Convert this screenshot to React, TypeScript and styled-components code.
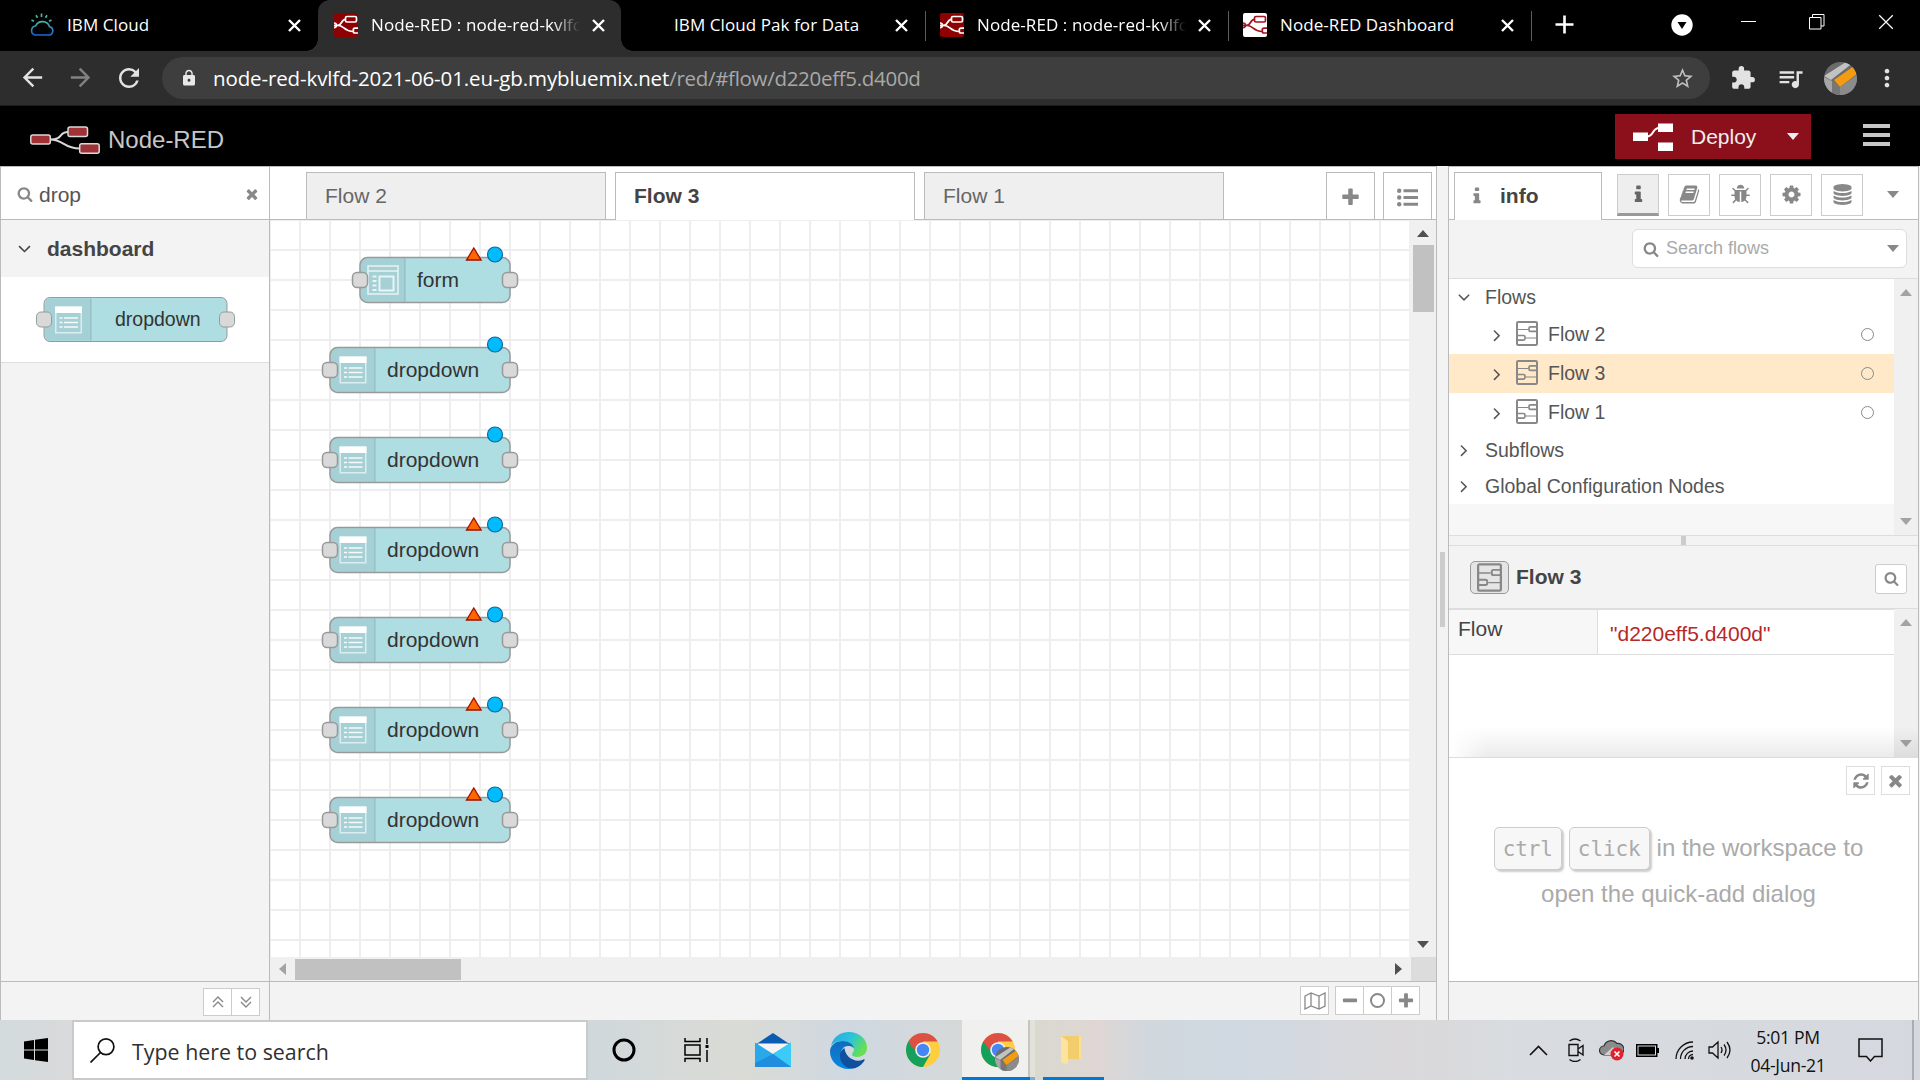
import React from 'react';
import styled, { createGlobalStyle, css } from 'styled-components';
import {
  MdArrowBack, MdArrowForward, MdRefresh, MdLock, MdStarBorder, MdExtension, MdQueueMusic, MdMoreVert,
} from 'react-icons/md';

const ui = '"Open Sans", "Noto Sans", sans-serif';
const sans = '"Liberation Sans", Arial, sans-serif';

const GlobalStyle = createGlobalStyle`
  * { box-sizing: border-box; }
  html, body { margin: 0; padding: 0; overflow: hidden; }
  svg { display: block; flex: none; }
`;

const Screen = styled.div`
  width: 1920px;
  height: 1080px;
  display: flex;
  flex-direction: column;
  overflow: hidden;
  background: #fff;
  font-family: ${sans};
  white-space: nowrap;
`;

/* ---------- glyphs ---------- */

const glyphs = {
  search: 'M1216 832q0-185-131.5-316.5t-316.5-131.5-316.5 131.5-131.5 316.5 131.5 316.5 316.5 131.5 316.5-131.5 131.5-316.5zm512 832q0 52-38 90t-90 38q-54 0-90-38l-343-342q-179 124-399 124-143 0-273.5-55.5t-225-150-150-225-55.5-273.5 55.5-273.5 150-225 225-150 273.5-55.5 273.5 55.5 225 150 150 225 55.5 273.5q0 220-124 399l343 343q37 37 37 90z',
  times: 'M1490 1322q0 40-28 68l-136 136q-28 28-68 28t-68-28l-294-294-294 294q-28 28-68 28t-68-28l-136-136q-28-28-28-68t28-68l294-294-294-294q-28-28-28-68t28-68l136-136q28-28 68-28t68 28l294 294 294-294q28-28 68-28t68 28l136 136q28 28 28 68t-28 68l-294 294 294 294q28 28 28 68z',
  plus: 'M1600 736v192q0 40-28 68t-68 28h-416v416q0 40-28 68t-68 28h-192q-40 0-68-28t-28-68v-416h-416q-40 0-68-28t-28-68v-192q0-40 28-68t68-28h416v-416q0-40 28-68t68-28h192q40 0 68 28t28 68v416h416q40 0 68 28t28 68z',
  minus: 'M1600 736v192q0 40-28 68t-68 28h-1216q-40 0-68-28t-28-68v-192q0-40 28-68t68-28h1216q40 0 68 28t28 68z',
  angleDown: 'M1395 736q0 13-10 23l-466 466q-10 10-23 10t-23-10l-466-466q-10-10-10-23t10-23l50-50q10-10 23-10t23 10l393 393 393-393q10-10 23-10t23 10l50 50q10 10 10 23z',
  angleRight: 'M1171 960q0 13-10 23l-466 466q-10 10-23 10t-23-10l-50-50q-10-10-10-23t10-23l393-393-393-393q-10-10-10-23t10-23l50-50q10-10 23-10t23 10l466 466q10 10 10 23z',
  info: 'M1216 1344v128q0 26-19 45t-45 19h-512q-26 0-45-19t-19-45v-128q0-26 19-45t45-19h64v-384h-64q-26 0-45-19t-19-45v-128q0-26 19-45t45-19h384q26 0 45 19t19 45v576h64q26 0 45 19t19 45zm-128-1152v192q0 26-19 45t-45 19h-256q-26 0-45-19t-19-45v-192q0-26 19-45t45-19h256q26 0 45 19t19 45z',
  cog: 'M1152 896q0-106-75-181t-181-75-181 75-75 181 75 181 181 75 181-75 75-181zm512-109v222q0 12-8 23t-20 13l-185 28q-19 54-39 91 35 50 107 138 10 12 10 25t-9 23q-27 37-99 108t-94 71q-12 0-26-9l-138-108q-44 23-91 38-16 136-29 186-7 28-36 28h-222q-14 0-24.5-8.5t-11.5-21.5l-28-184q-49-16-90-37l-141 107q-10 9-25 9-14 0-25-11-126-114-165-168-7-10-7-23 0-12 8-23 15-21 51-66.5t54-70.5q-27-50-41-99l-183-27q-13-2-21-12.5t-8-23.5v-222q0-12 8-23t19-13l186-28q14-46 39-92-40-57-107-138-10-12-10-24 0-10 9-23 26-36 98.5-107.5t94.5-71.5q13 0 26 10l138 107q44-23 91-38 16-136 29-186 7-28 36-28h222q14 0 24.5 8.5t11.5 21.5l28 184q49 16 90 37l142-107q9-9 24-9 13 0 25 10 129 119 165 170 7 8 7 22 0 12-8 23-15 21-51 66.5t-54 70.5q26 50 41 98l183 28q13 2 21 12.5t8 23.5z',
  database: 'M896 768q237 0 443-43t325-127v170q0 69-103 128t-280 93.5-385 34.5-385-34.5-280-93.5-103-128v-170q119 84 325 127t443 43zm0 768q237 0 443-43t325-127v170q0 69-103 128t-280 93.5-385 34.5-385-34.5-280-93.5-103-128v-170q119 84 325 127t443 43zm0-384q237 0 443-43t325-127v170q0 69-103 128t-280 93.5-385 34.5-385-34.5-280-93.5-103-128v-170q119 84 325 127t443 43zm0-1152q208 0 385 34.5t280 93.5 103 128v128q0 69-103 128t-280 93.5-385 34.5-385-34.5-280-93.5-103-128v-128q0-69 103-128t280-93.5 385-34.5z',
  refresh: 'M1639 1056q0 5-1 7-64 268-268 434.5t-478 166.5q-146 0-282.5-55t-243.5-157l-129 129q-19 19-45 19t-45-19-19-45v-448q0-26 19-45t45-19h448q26 0 45 19t19 45-19 45l-137 137q71 66 161 102t187 36q134 0 250-65t186-179q11-17 53-117 8-23 30-23h192q13 0 22.5 9.5t9.5 22.5zm25-800v448q0 26-19 45t-45 19h-448q-26 0-45-19t-19-45 19-45l138-138q-148-137-349-137-134 0-250 65t-186 179q-11 17-53 117-8 23-30 23h-199q-13 0-22.5-9.5t-9.5-22.5v-7q65-268 270-434.5t480-166.5q146 0 284 55.5t245 156.5l130-129q19-19 45-19t45 19 19 45z',
  bug: 'M1696 960q0 26-19 45t-45 19h-224q0 171-67 290l208 209q19 19 19 45t-19 45q-18 19-45 19t-45-19l-198-197q-5 5-15 13t-42 28.5-65 36.5-82 29-97 13v-896h-128v896q-51 0-101.5-13.5t-87-33-66-39-43.5-32.5l-15-14-183 207q-20 21-48 21-24 0-43-16-19-18-20.5-44.5t15.5-46.5l202-227q-58-114-58-274h-224q-26 0-45-19t-19-45 19-45 45-19h224v-294l-173-173q-19-19-19-45t19-45 45-19 45 19l173 173h844l173-173q19-19 45-19t45 19 19 45-19 45l-173 173v294h224q26 0 45 19t19 45zm-480-576h-640q0-133 93.5-226.5t226.5-93.5 226.5 93.5 93.5 226.5z',
  book: 'M1703 478q40 57 18 129l-275 906q-19 64-76.5 107.5t-122.5 43.5h-923q-77 0-148.5-53.5t-99.5-131.5q-24-67-2-127 0-4 3-27t4-37q1-8-3-21.500t-3-19.500q2-11 8-21t16.500-23.500 16.500-23.500q23-38 45-91.500t30-91.500q3-10 .5-30t-.5-28q3-11 17-28t17-23q21-36 42-92t25-90q1-9-2.500-32t.5-28q4-13 22-30.500t22-22.500q19-26 42.500-84.500t27.500-96.500q1-8-3-25.500t-2-26.500q2-8 9-18t18-23 17-21q8-12 16.500-30.500t15-35 16-36 19.500-32 26.500-23.500 36-11.500 47.500 5.500l-1 3q38-9 51-9h761q74 0 114 56t18 130l-274 906q-36 119-71.500 153.500t-128.500 34.500h-869q-27 0-38 15-11 16-1 43 24 70 144 70h923q29 0 56-15.500t35-41.500l300-987q7-22 5-57 38 15 59 43zm-1064 2q-4 13 2 22.500t20 9.500h608q13 0 25.500-9.500t16.500-22.500l21-64q4-13-2-22.500t-20-9.500h-608q-13 0-25.500 9.500t-16.500 22.500zm-83 256q-4 13 2 22.500t20 9.500h608q13 0 25.500-9.500t16.500-22.500l21-64q4-13-2-22.500t-20-9.500h-608q-13 0-25.500 9.500t-16.500 22.500z',
};

type GlyphName = keyof typeof glyphs;

const Glyph = ({ name, size = 18, color = '#888' }: { name: GlyphName; size?: number; color?: string }) => (
  <svg width={size} height={size} viewBox="0 0 1792 1792" fill={color}><path d={glyphs[name]} /></svg>
);

type Direction = 'up' | 'down' | 'left' | 'right';
const triangles: Record<Direction, string> = {
  up: '0,7 12,7 6,0', down: '0,0 12,0 6,7', left: '7,0 7,12 0,6', right: '0,0 0,12 7,6',
};
const Arrow = ({ dir = 'down', color = '#888' }: { dir?: Direction; color?: string }) => {
  const flat = dir === 'up' || dir === 'down';
  return (
    <svg width={flat ? 12 : 7} height={flat ? 7 : 12}><polygon points={triangles[dir]} fill={color} /></svg>
  );
};

/* ---------- browser tabs ---------- */

const TabStrip = styled.div`
  height: 51px;
  flex: none;
  display: flex;
  background: #000;
  padding-left: 15px;
  font-family: ${ui};
  color: #fff;
`;

const BrowserTab = styled.div<{ $active?: boolean; $line?: boolean }>`
  position: relative;
  width: 303px;
  height: 51px;
  display: flex;
  align-items: center;
  padding: 0 16px 1px 16px;
  font-size: 17px;
  ${p => p.$active && css`
    background: #2d2d2d;
    border-radius: 12px 12px 0 0;
    &::before, &::after {
      content: '';
      position: absolute;
      bottom: 0;
      width: 12px;
      height: 12px;
    }
    &::before { left: -12px; background: radial-gradient(circle at 0 0, #000 11.5px, #2d2d2d 12px); }
    &::after { right: -12px; background: radial-gradient(circle at 100% 0, #000 11.5px, #2d2d2d 12px); }
  `}
  ${p => p.$line && css`
    &::after {
      content: '';
      position: absolute;
      right: -2px;
      top: 11px;
      width: 1px;
      height: 30px;
      background: #5c5c5c;
    }
  `}
`;

const FirstTab = styled(BrowserTab)`padding-left: 15px; padding-right: 17px;`;

const Favicon = styled.div`
  width: 24px;
  height: 24px;
  margin-right: 13px;
  flex: none;
`;

const TabTitle = styled.div<{ $fade?: boolean }>`
  width: 209px;
  overflow: hidden;
  padding-bottom: 2px;
  letter-spacing: 0.08px;
  ${p => p.$fade && css`mask-image: linear-gradient(90deg, #000 182px, transparent 209px);`}
`;

const TabClose = styled.div`margin-left: 12px;`;

const Cross = ({ size = 13, w = 2.4 }: { size?: number; w?: number }) => (
  <svg width={size} height={size} viewBox="0 0 13 13"><path d="M1 1L12 12M12 1L1 12" stroke="#fff" strokeWidth={w} /></svg>
);

const NodeRedFavicon = ({ bg, ink }: { bg: string; ink: string }) => (
  <svg width="24" height="24" viewBox="0 0 24 24">
    <rect width="24" height="24" rx="2" fill={bg} />
    <g fill="none" stroke={ink} strokeWidth="1.7">
      <path d="M0 12.300H4C8 12.300 7 6.500 11.500 6.300M4 12.300C10 12.300 10 18.500 19 18.500" />
      <rect x="11.500" y="3.500" width="11" height="5.500" rx="1.500" />
      <path d="M24 15.200H21q-1.700 0-1.700 1.700v1.400q0 1.700 1.700 1.700H24" />
      <path d="M0 10q2.500 0 2.500 2.300T0 14.600" />
    </g>
  </svg>
);

const CloudFavicon = () => (
  <svg width="24" height="24" viewBox="0 0 24 24" fill="none">
    <defs>
      <linearGradient id="sky" x1="0" y1="0" x2="0" y2="1"><stop offset="0" stopColor="#49b5a9" /><stop offset="1" stopColor="#1667d8" /></linearGradient>
    </defs>
    <path d="M5 22h13.500a4.200 4.200 0 0 0 1-8.300A7.500 7.500 0 0 0 5.600 13 4.600 4.600 0 0 0 5 22z" stroke="url(#sky)" strokeWidth="1.600" />
    <path d="M11.500 0.500v3.500M6 2.300l1.500 2.500M17 2.300l-1.500 2.500M1.500 7l2.500 1.300M21.500 7l-2.500 1.300" stroke="#49b5a9" strokeWidth="1.700" />
  </svg>
);

const WindowControls = styled.div`
  display: flex;
  align-items: flex-start;
  flex: 1;
  padding: 14px 27px 0 25px;
`;
const NewTab = styled.div`padding-top: 1px; margin-right: 97px;`;
const TabSearch = styled.div`margin-right: 48px;`;
const Minimise = styled.div`width: 15px; height: 1px; background: #fff; margin: 7px 53px 0 0;`;
const Restore = styled.div`margin-right: 53px;`;

/* ---------- browser toolbar ---------- */

const Toolbar = styled.div`
  height: 55px;
  flex: none;
  display: flex;
  align-items: center;
  background: #2d2d2d;
  border-bottom: 1px solid #1c1c1c;
  padding: 0 17px 0 18px;
  color: #e2e2e2;
`;
const NavButtons = styled.div`
  flex: none;
  display: flex;
  gap: 19px;
  width: 144px;
  svg:nth-child(2) { color: #828282; }
`;
const Omnibox = styled.div`
  width: 1548px;
  height: 42px;
  flex: none;
  border-radius: 21px;
  background: #3e3e3e;
  display: flex;
  align-items: center;
  padding: 0 15px 0 18px;
  font: 20.5px ${ui};
  color: #fff;
`;
const Url = styled.div`
  flex: 1;
  padding-left: 15px;
  letter-spacing: -0.12px;
  span { color: #a9a9a9; letter-spacing: -0.3px; }
`;
const Extensions = styled.div`
  flex: 1;
  display: flex;
  align-items: center;
  padding-left: 20px;
`;
const Avatar = styled.div`margin: 0 16px 0 19px;`;

const AvatarArt = ({ size = 33 }: { size?: number }) => (
  <svg width={size} height={size} viewBox="0 0 33 33">
    <defs><clipPath id="disc"><circle cx="16.500" cy="16.500" r="16.500" /></clipPath></defs>
    <g clipPath="url(#disc)">
      <rect width="33" height="33" fill="#6c6c6c" />
      <path d="M0 14L22 0h8L7 18z" fill="#c2c2c2" />
      <path d="M0 15l8 4v14H0z" fill="#a6a6a6" />
      <path d="M10 18L30 4l3 8-17 13z" fill="#f39c12" />
      <path d="M8 19l8 6v8H8zM16 25l17-12v20H16z" fill="#8b8b8b" />
      <path d="M8 19l8 6v8H8z" fill="#777" />
    </g>
  </svg>
);

/* ---------- editor header ---------- */

const EditorHeader = styled.div`
  height: 60px;
  flex: none;
  display: flex;
  align-items: center;
  background: #000;
  padding: 0 30px 0 30px;
`;
const Brand = styled.div`
  flex: 1;
  display: flex;
  align-items: center;
  gap: 8px;
  padding-top: 7px;
  font-size: 24px;
  color: #c7c7c7;
`;
const Deploy = styled.div`
  width: 196px;
  height: 45px;
  margin: 1px 52px 0 0;
  background: #8c101c;
  color: #eee;
  display: flex;
  align-items: center;
  padding: 0 12px 0 18px;
  font-size: 21px;
`;
const DeployLabel = styled.div`flex: 1; padding-left: 18px;`;
const MenuBars = styled.div`
  width: 27px;
  height: 22px;
  margin-bottom: 2px;
  display: flex;
  flex-direction: column;
  justify-content: space-between;
  div { height: 4px; background: #c7c7c7; }
`;

/* ---------- editor body ---------- */

const Editor = styled.div`
  height: 854px;
  flex: none;
  display: flex;
  background: #f3f3f3;
  padding: 0 1px;
`;

const column = css`
  display: flex;
  flex-direction: column;
  border: 1px solid #bbb;
  border-bottom: 0;
`;

const Footer = styled.div`
  height: 39px;
  flex: none;
  display: flex;
  justify-content: flex-end;
  align-items: flex-start;
  background: #f3f3f3;
  border-top: 1px solid #bbb;
`;
const BoxButton = styled.div<{ $h?: number }>`
  width: 29px;
  height: ${p => p.$h ?? 29}px;
  border: 1px solid #ccc;
  background: #fff;
  display: flex;
  align-items: center;
  justify-content: center;
  & + & { margin-left: -1px; }
`;

const Palette = styled.div`${column} width: 269px; margin-left: -1px; border-right: 0;`;
const PaletteSearch = styled.div`
  height: 53px;
  border-bottom: 1px solid #bbb;
  background: #fff;
  display: flex;
  align-items: center;
  padding: 3px 9px 0 16px;
  font-size: 21px;
  color: #555;
  div { flex: 1; padding-left: 6px; }
  svg { margin-bottom: 2px; }
`;
const Category = styled.div`
  height: 57px;
  display: flex;
  align-items: center;
  gap: 12px;
  padding-left: 13px;
  font-size: 21px;
  font-weight: bold;
  color: #444;
`;
const PaletteItems = styled.div`
  position: relative;
  height: 86px;
  background: #fff;
  border-bottom: 1px solid #ddd;
`;
const PaletteFill = styled.div`flex: 1;`;
const PaletteFooter = styled(Footer)`padding: 6px 9px 0 0;`;

/* ---------- flow nodes ---------- */

const NodeFrame = styled.div`
  position: absolute;
  height: 45px;
  color: #333;
  font-size: 21px;
  > svg { overflow: visible; position: absolute; left: 0; top: 0; }
`;
const NodeLabel = styled.div<{ $left: number; $size: number }>`
  position: relative;
  padding-left: ${p => p.$left}px;
  font-size: ${p => p.$size}px;
  line-height: 45px;
`;

const DropdownGlyph = () => (
  <g>
    <rect x="0.750" y="0.750" width="25.500" height="25.500" fill="none" stroke="#fff" strokeOpacity=".6" strokeWidth="1.500" />
    <rect width="27" height="6.500" fill="#fff" />
    {[11.5, 16, 20.5].map(y => (
      <path key={y} d={`M4.500 ${y}h3M9 ${y}h14`} stroke="#fff" strokeOpacity=".9" strokeWidth="1.500" />
    ))}
  </g>
);
const FormGlyph = () => (
  <g fill="none" stroke="#fff" strokeOpacity=".75" strokeWidth="1.500">
    <rect x="-1.500" y="-0.500" width="30" height="28" />
    <path d="M-1 4.500h29" />
    <rect x="10" y="10" width="14" height="14" strokeWidth="2" />
    <path d="M3 10h4M3 14.500h4M3 19h4M3 23.500h4" strokeWidth="2" />
  </g>
);

type FlowNodeProps = { x: number; y: number; w: number; label: string; warn?: boolean; changed?: boolean; small?: boolean };

const FlowNode = ({ x, y, w, label, warn, changed, small }: FlowNodeProps) => {
  const h = small ? 44 : 45;
  const cell = small ? 47 : 45;
  return (
    <NodeFrame style={{ left: x, top: y, width: w }}>
      <svg width={w} height={h}>
        <g transform="translate(0 0.5)">
          <rect width={w} height={h} rx={small ? 6 : 7.5} fill="#aedde2" stroke="#999" strokeWidth={small ? 1 : 1.5} />
          <path d={`M${cell} 1V${h - 1}H7q-6 0-6-6V7q0-6 6-6z`} fill="#000" fillOpacity=".05" />
          <path d={`M${cell} 1V${h - 1}`} stroke="#000" strokeOpacity=".1" strokeWidth="1.500" />
          <g transform={`translate(${small ? 11 : 9.5} 9)`}>{label === 'form' ? <FormGlyph /> : <DropdownGlyph />}</g>
          {[-7.5, w - 7.5].map(px => (
            <rect key={px} x={px} y={h / 2 - 7.500} width="15" height="15" rx="4.500" fill="#d9d9d9" stroke="#999" strokeWidth={small ? 1 : 1.5} />
          ))}
          {warn && <path d="M136.500 2.500l7.300-12 7.300 12z" transform={`translate(${w - 180} 0)`} fill="#ff6600" stroke="#a01000" strokeWidth="1.300" />}
          {changed && <circle cx={w - 15} cy="-3" r="7.500" fill="#00bcff" stroke="#0b6a99" strokeWidth="1.200" />}
        </g>
      </svg>
      <NodeLabel $left={small ? 71 : 57} $size={small ? 19.5 : 21}>{label}</NodeLabel>
    </NodeFrame>
  );
};

/* ---------- workspace ---------- */

const Workspace = styled.div`${column} width: 1168px;`;
const WorkspaceTabs = styled.div`
  height: 53px;
  flex: none;
  display: flex;
  align-items: flex-end;
  background: #fff;
  border-bottom: 1px solid #bbb;
  padding: 0 4px 0 36px;
`;
const FlowTab = styled.div<{ $active?: boolean }>`
  width: 300px;
  height: 47px;
  margin-right: 9px;
  border: 1px solid #bbb;
  border-bottom: 0;
  background: ${p => (p.$active ? '#fff' : '#efefef')};
  padding-left: 18px;
  font-size: 21px;
  line-height: 45px;
  color: #666;
  ${p => p.$active && css`
    height: 48px;
    margin-bottom: -1px;
    font-weight: bold;
    color: #444;
  `}
`;
const TabActions = styled.div`
  margin-left: auto;
  display: flex;
  gap: 8px;
`;
const TabAction = styled.div`
  width: 49px;
  height: 47px;
  border: 1px solid #bbb;
  border-bottom: 0;
  display: flex;
  align-items: center;
  justify-content: center;
  padding-top: 3px;
`;
const Stage = styled.div`flex: 1; display: flex; min-height: 0;`;
const Canvas = styled.div`
  position: relative;
  width: 1139px;
  overflow: hidden;
  background-color: #fff;
  background-image: linear-gradient(90deg, #eee 2px, transparent 2px), linear-gradient(#eee 2px, transparent 2px);
  background-size: 30px 30px;
  background-position: -1px -1px;
`;
const VScroll = styled.div`
  flex: 1;
  display: flex;
  flex-direction: column;
  align-items: center;
  background: #f0f0f0;
  padding: 10px 0 9px 1px;
`;
const VThumb = styled.div`width: 21px; height: 67px; margin: 8px 0 auto; background: #c1c1c1;`;
const HScroll = styled.div`
  height: 24px;
  flex: none;
  display: flex;
  align-items: center;
  background: #f0f0f0;
  padding-left: 9px;
`;
const HThumb = styled.div`width: 166px; height: 21px; margin: 0 auto 0 9px; background: #c1c1c1;`;
const ScrollCorner = styled.div`width: 25px; height: 24px; margin-left: 9px; background: #dcdcdc;`;
const WorkspaceFooter = styled(Footer)`padding: 4px 16px 0 0;`;
const ZoomGroup = styled.div`display: flex; margin-left: 6px;`;

const Divider = styled.div`
  width: 11px;
  display: flex;
  align-items: center;
  justify-content: center;
  padding-bottom: 7px;
  &::after { content: ''; width: 5px; height: 75px; background: #ccc; }
`;

const nodes: FlowNodeProps[] = [
  { x: 90, y: 37, w: 150, label: 'form', warn: true, changed: true },
  { x: 60, y: 127, w: 180, label: 'dropdown', changed: true },
  { x: 60, y: 217, w: 180, label: 'dropdown', changed: true },
  { x: 60, y: 307, w: 180, label: 'dropdown', warn: true, changed: true },
  { x: 60, y: 397, w: 180, label: 'dropdown', warn: true, changed: true },
  { x: 60, y: 487, w: 180, label: 'dropdown', warn: true, changed: true },
  { x: 60, y: 577, w: 180, label: 'dropdown', warn: true, changed: true },
];

/* ---------- sidebar ---------- */

const Sidebar = styled.div`${column} width: 471px;`;
const SidebarTabs = styled.div`
  height: 53px;
  flex: none;
  display: flex;
  background: #fff;
  border-bottom: 1px solid #bbb;
  padding: 5px 19px 0 5px;
`;
const InfoTab = styled.div`
  width: 148px;
  height: 48px;
  margin-bottom: -1px;
  border: 1px solid #bbb;
  border-bottom: 0;
  background: #fff;
  display: flex;
  align-items: center;
  gap: 13px;
  padding: 0 0 1px 12px;
  font-size: 21px;
  font-weight: bold;
  color: #444;
`;
const SidebarButtons = styled.div`
  flex: 1;
  display: flex;
  gap: 9px;
  padding: 2px 0 0 15px;
`;
const SidebarButton = styled.div<{ $active?: boolean }>`
  width: 42px;
  height: 42px;
  border: 1px solid #ccc;
  background: #fff;
  display: flex;
  align-items: center;
  justify-content: center;
  padding-bottom: 1px;
  ${p => p.$active && css`background: #eee; border-bottom: 3px solid #999; padding-bottom: 0;`}
`;
const TabsCaret = styled.div`padding-top: 19px;`;
const FilterBar = styled.div`
  height: 59px;
  flex: none;
  border-bottom: 1px solid #ddd;
  display: flex;
  justify-content: flex-end;
  padding: 9px 11px 0 0;
`;
const FilterBox = styled.div`
  width: 275px;
  height: 39px;
  border: 1px solid #ddd;
  border-radius: 6px;
  background: #fff;
  display: flex;
  align-items: center;
  padding: 0 7px 0 10px;
  font-size: 18px;
  color: #aaa;
  div { flex: 1; padding-left: 7px; }
`;
const Scrollable = styled.div<{ $h: number; $bg: string }>`
  height: ${p => p.$h}px;
  flex: none;
  display: flex;
  background: ${p => p.$bg};
`;
const ScrollBody = styled.div`width: 445px;`;
const ScrollTrack = styled.div`
  flex: 1;
  display: flex;
  flex-direction: column;
  justify-content: space-between;
  align-items: center;
  background: #f0f0f0;
  padding: 10px 0;
`;
const TreeRow = styled.div<{ $depth?: number; $selected?: boolean }>`
  height: ${p => (p.$depth ? 39 : 36)}px;
  background: ${p => (p.$selected ? '#ffe9c8' : '#fff')};
  display: flex;
  align-items: center;
  padding: 0 20px 0 ${p => (p.$depth ? 38 : 5)}px;
  font-size: 19.5px;
  color: #555;
`;
const TreeLabel = styled.div<{ $gap: number }>`flex: 1; padding-left: ${p => p.$gap}px;`;
const TreeIcon = styled.div`padding: 0 0 3px 9px;`;
const Ring = styled.div<{ $size: number; $w: number }>`
  width: ${p => p.$size}px;
  height: ${p => p.$size}px;
  border: ${p => p.$w}px solid #888;
  border-radius: 50%;
`;
const Grip = styled.div`
  height: 11px;
  flex: none;
  border: 1px solid #ddd;
  border-width: 1px 0;
  display: flex;
  justify-content: center;
  &::after { content: ''; width: 5px; background: #ccc; }
`;
const DetailHeader = styled.div`
  height: 63px;
  flex: none;
  border-bottom: 1px solid #ddd;
  display: flex;
  align-items: center;
  padding: 0 11px 0 21px;
  font-size: 21px;
  font-weight: bold;
  color: #444;
`;
const DetailIcon = styled.div`
  width: 39px;
  height: 33px;
  margin-right: 7px;
  border: 1px solid #999;
  border-radius: 5px;
  background: #e5e5e5;
  display: flex;
  align-items: center;
  justify-content: center;
`;
const DetailButton = styled.div`
  width: 32px;
  height: 30px;
  margin: 3px 0 0 auto;
  border: 1px solid #ccc;
  border-radius: 3px;
  background: #fff;
  display: flex;
  align-items: center;
  justify-content: center;
`;
const PropertyRow = styled.div`
  height: 46px;
  display: grid;
  grid-template-columns: 149px 1fr;
  grid-template-rows: 44px;
  border: 1px solid #ddd;
  border-width: 1px 0;
  font-size: 21px;
`;
const PropertyName = styled.div`
  border-right: 1px solid #ddd;
  background: #f7f7f7;
  padding-left: 9px;
  line-height: 38px;
  color: #444;
`;
const PropertyValue = styled.div`padding-left: 12px; line-height: 48px; color: #b72828;`;
const Details = styled.div`
  position: relative;
  &::after {
    content: '';
    position: absolute;
    inset: auto 0 0 0;
    height: 30px;
    background: linear-gradient(transparent, rgba(0, 0, 0, 0.08));
    mask-image: linear-gradient(90deg, transparent, #000 40px);
  }
`;
const Tips = styled.div`
  flex: 1;
  border-top: 1px solid #ddd;
  background: #fff;
  display: flex;
  flex-direction: column;
  color: #aaa;
  font-size: 24px;
`;
const TipButtons = styled.div`
  display: flex;
  justify-content: flex-end;
  gap: 7px;
  padding: 8px 8px 0 0;
  & > div { border-color: #ddd; margin: 0; }
`;
const TipLine = styled.div`
  height: 46px;
  display: flex;
  align-items: center;
  justify-content: center;
  padding-right: 10px;
`;
const TipText = styled.div`
  padding-top: 30px;
`;
const Key = styled.kbd`
  height: 43px;
  margin-right: 7px;
  padding: 0 8px;
  border: 1px solid #ccc;
  border-radius: 5px;
  background: #f7f7f7;
  box-shadow: 2px 2px 2px rgba(0, 0, 0, 0.2);
  font: 21px/43px "DejaVu Sans Mono", monospace;
  letter-spacing: -0.1px;
`;
const SidebarFooter = styled(Footer)``;

const FlowGlyph = ({ w = 22, h = 25 }: { w?: number; h?: number }) => (
  <svg width={w} height={h} viewBox="0 0 22 25" fill="none" stroke="#888" strokeWidth="1.700">
    <rect x="1" y="1" width="20" height="23" rx="1.200" strokeWidth="2" />
    <path d="M1 8.500h11M10 17h11" strokeWidth="1.200" />
    <path d="M21 5.800h-6.500q-1.500 0-1.500 1.500v1.600q0 1.500 1.500 1.500H21M1 14.500h6.500q1.500 0 1.500 1.500v1.600q0 1.500-1.500 1.500H1" />
  </svg>
);

const flows = [{ name: 'Flow 2' }, { name: 'Flow 3', selected: true }, { name: 'Flow 1' }];

/* ---------- taskbar ---------- */

const Taskbar = styled.div`
  height: 60px;
  flex: none;
  display: flex;
  background: linear-gradient(90deg, #d3dadd 0, #d9dadb 70px, #d0d8dc 590px, #dadbd5 740px, #cfd8e1 850px, #d5d9da 950px, #d9d9cf 1036px, #dfd6d4 1095px, #d0d8de 1150px, #d0d9e2 1240px, #dad8da 1400px, #d8dce0 1520px, #d5d9df 1920px);
  font-family: ${ui};
`;
const Start = styled.div`width: 72px; padding: 18px 0 0 24px;`;
const SearchField = styled.div`
  width: 516px;
  height: 60px;
  border: 2px solid #c9cbcb;
  background: #fff;
  display: flex;
  align-items: center;
  gap: 17px;
  padding: 0 16px;
  font-size: 21.4px;
  color: #303030;
  span { padding-top: 2px; }
`;
const TaskButton = styled.div<{ $w: number; $running?: boolean; $focused?: boolean }>`
  width: ${p => p.$w}px;
  height: 60px;
  display: flex;
  align-items: center;
  justify-content: center;
  ${p => p.$running && css`border-bottom: 3px solid #0078d7; padding-top: 3px;`}
  ${p => p.$focused && css`background: #f0f0ee; box-shadow: inset -2px 0 #c6c6c0;`}
`;
const Stack = styled.div`
  width: 13px;
  display: flex;
  &::before { content: ''; width: 5px; background: #e2e1da; border-bottom: 3px solid #78aede; }
`;
const Tray = styled.div`
  flex: 1;
  display: flex;
  align-items: center;
  justify-content: flex-end;
  padding-right: 6px;
`;
const TrayItem = styled.div<{ $gap: number }>`margin-right: ${p => p.$gap}px;`;
const Clock = styled.div`
  width: 82px;
  height: 58px;
  margin-right: 29px;
  padding-top: 2px;
  display: flex;
  flex-direction: column;
  justify-content: space-between;
  align-items: center;
  font-size: 17.6px;
  line-height: 28px;
  letter-spacing: -0.3px;
  color: #111;
`;
const ShowDesktop = styled.div`width: 2px; height: 60px; background: #a9adb1;`;

const ChromeLogo = ({ size = 34 }: { size?: number }) => (
  <svg width={size} height={size} viewBox="0 0 34 34">
    <circle cx="17" cy="17" r="17" fill="#ffcd40" />
    <path d="M17 17L2.300 8.500A17 17 0 0 0 17 34l7.400-13z" fill="#15a05c" />
    <path d="M17 17H9.600L2.300 8.500A17 17 0 0 1 31.700 8.500H17z" fill="#dd5144" />
    <path d="M17 8.500a8.500 8.500 0 0 0-8.500 8.500l-6.200-8.500z" fill="#dd5144" />
    <circle cx="17" cy="17" r="7.800" fill="#f1f1f1" />
    <circle cx="17" cy="17" r="6.200" fill="#4587f4" />
  </svg>
);

const EdgeLogo = () => (
  <svg width="37" height="37" viewBox="0 0 37 37">
    <defs>
      <linearGradient id="edgeTop" x1="0" y1="0" x2="1" y2="0.500"><stop offset="0" stopColor="#2aa6ea" /><stop offset=".55" stopColor="#2cc4d9" /><stop offset="1" stopColor="#66e052" /></linearGradient>
      <linearGradient id="edgeBody" x1="0" y1="0" x2="0" y2="1"><stop offset="0" stopColor="#0f6cbd" /><stop offset="1" stopColor="#0a86e0" /></linearGradient>
    </defs>
    <path d="M1 14C3 5 10 0 19 0c10 0 18 7 18 15.500 0 6-4.500 9.500-9.500 9.500-3.500 0-5.500-1-5.500-2.500s2-2 2-5.500C24 12 18 9 12.500 9 7 9 3 11 1 14z" fill="url(#edgeTop)" />
    <path d="M24 17c0-5-5.500-8-11-8C5 9 0 14 0 19.500 0 29 8 37 18.500 37c2 0 4-.5 6-1.200C17 35 11 29 11 22c0-4.500 3-8 7-8 3.500 0 6 1.500 6 3z" fill="url(#edgeBody)" />
    <path d="M14.500 16C11 18 10 21 10 24c0 7 6 13 13 12.500 5-.5 9-4 11.500-8 .5-1-.4-1.400-1.200-1-1.600.8-3.500 1.200-5.300 1.200C21 28.500 15 23 14.500 16z" fill="#0f4f9e" />
  </svg>
);

const MailLogo = () => (
  <svg width="36" height="34" viewBox="0 0 36 34">
    <path d="M0 12L18 0l18 12z" fill="#0a5cb0" />
    <path d="M3 10.500h30v12H3z" fill="#f4f4f4" />
    <path d="M0 9.500V34h36V9.500L18 21z" fill="#29a9ea" />
    <path d="M18 21l18-11.500V34z" fill="#3ccbf8" />
    <path d="M0 34V30l18-9 18 13z" fill="#1f8fdd" />
  </svg>
);

const FolderLogo = () => (
  <svg width="25" height="31" viewBox="0 0 25 31">
    <path d="M0 1h20v23H6z" fill="#f3cc6b" />
    <path d="M20 1v23h-2V1z" fill="#fbdf92" />
    <path d="M0 1l7 5v24L0 27z" fill="#fde39b" />
  </svg>
);

const App = () => (
  <Screen>
    <GlobalStyle />

    <TabStrip>
      <FirstTab>
        <Favicon><CloudFavicon /></Favicon>
        <TabTitle>IBM Cloud</TabTitle>
        <TabClose><Cross /></TabClose>
      </FirstTab>
      <BrowserTab $active>
        <Favicon><NodeRedFavicon bg="#8f0000" ink="#fff" /></Favicon>
        <TabTitle $fade>Node-RED : node-red-kvlfd</TabTitle>
        <TabClose><Cross /></TabClose>
      </BrowserTab>
      <BrowserTab $line>
        <Favicon />
        <TabTitle>IBM Cloud Pak for Data</TabTitle>
        <TabClose><Cross /></TabClose>
      </BrowserTab>
      <BrowserTab $line>
        <Favicon><NodeRedFavicon bg="#8f0000" ink="#fff" /></Favicon>
        <TabTitle $fade>Node-RED : node-red-kvlfd</TabTitle>
        <TabClose><Cross /></TabClose>
      </BrowserTab>
      <BrowserTab $line>
        <Favicon><NodeRedFavicon bg="#fff" ink="#a01520" /></Favicon>
        <TabTitle>Node-RED Dashboard</TabTitle>
        <TabClose><Cross /></TabClose>
      </BrowserTab>
      <WindowControls>
        <NewTab><svg width="19" height="19"><path d="M9.500 0.500v18M0.500 9.500h18" stroke="#fff" strokeWidth="2.600" /></svg></NewTab>
        <TabSearch><svg width="22" height="22"><circle cx="11" cy="11" r="10.700" fill="#fff" /><path d="M6.500 8h9L11 15z" fill="#000" /></svg></TabSearch>
        <Minimise />
        <Restore><svg width="16" height="16" fill="none" stroke="#fff"><path d="M0.500 3.500h11.500v11.500H0.500zM3.500 3.500V0.500h11.500v11.500h-3" /></svg></Restore>
        <Cross size={16} w={1} />
      </WindowControls>
    </TabStrip>

    <Toolbar>
      <NavButtons><MdArrowBack size={29} /><MdArrowForward size={29} /><MdRefresh size={30} /></NavButtons>
      <Omnibox>
        <MdLock size={18} color="#e8e8e8" />
        <Url>node-red-kvlfd-2021-06-01.eu-gb.mybluemix.net<span>/red/#flow/d220eff5.d400d</span></Url>
        <MdStarBorder size={25} color="#bdbdbd" />
      </Omnibox>
      <Extensions>
        <MdExtension size={26} />
        <TrayItem $gap={20} />
        <MdQueueMusic size={29} />
        <Avatar><AvatarArt /></Avatar>
        <MdMoreVert size={28} />
      </Extensions>
    </Toolbar>

    <EditorHeader>
      <Brand>
        <svg width="70" height="28" viewBox="0 0 70 28" stroke="#d9d9d9" strokeWidth="1.500">
          <path d="M20 13.500c14 0 8-7.500 18-7.500M20 13.500c14 0 13 9 30 9" fill="none" strokeWidth="2" />
          <g fill="#a03236">
            <rect x="0.800" y="9" width="19.500" height="9" rx="2" />
            <rect x="38" y="1" width="19.500" height="9.500" rx="2" />
            <rect x="49.700" y="17.700" width="19.500" height="9.500" rx="2" />
          </g>
        </svg>
        <span>Node-RED</span>
      </Brand>
      <Deploy>
        <svg width="40" height="28" viewBox="0 0 40 28" fill="#fff">
          <path d="M0 9.500h15v8.500H0zM25 0.500h15V9H25zM25 19.500h15V28H25z" />
          <path d="M14 13.500c7 0 5-8.500 12-8.500" fill="none" stroke="#fff" strokeWidth="2" />
        </svg>
        <DeployLabel>Deploy</DeployLabel>
        <Arrow color="#eee" />
      </Deploy>
      <MenuBars><div /><div /><div /></MenuBars>
    </EditorHeader>

    <Editor>
      <Palette>
        <PaletteSearch>
          <Glyph name="search" size={16} />
          <div>drop</div>
          <Glyph name="times" size={16} />
        </PaletteSearch>
        <Category><Glyph name="angleDown" size={21} color="#444" />dashboard</Category>
        <PaletteItems><FlowNode x={43} y={20} w={183} label="dropdown" small /></PaletteItems>
        <PaletteFill />
        <PaletteFooter>
          <BoxButton $h={28}>
            <svg width="12" height="12" fill="none" stroke="#888" strokeWidth="1.400"><path d="M1 6l5-5 5 5M1 11l5-5 5 5" /></svg>
          </BoxButton>
          <BoxButton $h={28}>
            <svg width="12" height="12" fill="none" stroke="#888" strokeWidth="1.400"><path d="M1 1l5 5 5-5M1 6l5 5 5-5" /></svg>
          </BoxButton>
        </PaletteFooter>
      </Palette>

      <Workspace>
        <WorkspaceTabs>
          <FlowTab>Flow 2</FlowTab>
          <FlowTab $active>Flow 3</FlowTab>
          <FlowTab>Flow 1</FlowTab>
          <TabActions>
            <TabAction><Glyph name="plus" size={21} /></TabAction>
            <TabAction>
              <svg width="21" height="19" fill="#888">
                <circle cx="2.200" cy="2.800" r="2.200" /><circle cx="2.200" cy="9.500" r="2.200" /><circle cx="2.200" cy="16.200" r="2.200" />
                <path d="M6.500 1.300H21v3H6.500zM6.500 8H21v3H6.500zM6.500 14.700H21v3H6.500z" />
              </svg>
            </TabAction>
          </TabActions>
        </WorkspaceTabs>
        <Stage>
          <Canvas>{nodes.map(n => <FlowNode key={n.y} {...n} />)}</Canvas>
          <VScroll>
            <Arrow dir="up" color="#505050" />
            <VThumb />
            <Arrow dir="down" color="#505050" />
          </VScroll>
        </Stage>
        <HScroll>
          <Arrow dir="left" color="#a3a3a3" />
          <HThumb />
          <Arrow dir="right" color="#505050" />
          <ScrollCorner />
        </HScroll>
        <WorkspaceFooter>
          <BoxButton>
            <svg width="22" height="18" fill="none" stroke="#888" strokeWidth="1.300">
              <path d="M1 4l6-3 8 3 6-3v13l-6 3-8-3-6 3zM7 1v13M15 4v13" />
            </svg>
          </BoxButton>
          <ZoomGroup>
            <BoxButton><Glyph name="minus" size={18} /></BoxButton>
            <BoxButton><Ring $size={15} $w={2} /></BoxButton>
            <BoxButton><Glyph name="plus" size={18} /></BoxButton>
          </ZoomGroup>
        </WorkspaceFooter>
      </Workspace>

      <Divider />

      <Sidebar>
        <SidebarTabs>
          <InfoTab><Glyph name="info" size={20} />info</InfoTab>
          <SidebarButtons>
            <SidebarButton $active><Glyph name="info" size={21} color="#666" /></SidebarButton>
            <SidebarButton><Glyph name="book" size={21} /></SidebarButton>
            <SidebarButton><Glyph name="bug" size={21} /></SidebarButton>
            <SidebarButton><Glyph name="cog" size={21} /></SidebarButton>
            <SidebarButton><Glyph name="database" size={21} /></SidebarButton>
          </SidebarButtons>
          <TabsCaret><Arrow /></TabsCaret>
        </SidebarTabs>
        <FilterBar>
          <FilterBox><Glyph name="search" size={16} /><div>Search flows</div><Arrow /></FilterBox>
        </FilterBar>
        <Scrollable $h={256} $bg="#f7f7f7">
          <ScrollBody>
            <TreeRow><Glyph name="angleDown" size={20} color="#555" /><TreeLabel $gap={11}>Flows</TreeLabel></TreeRow>
            {flows.map(f => (
              <TreeRow key={f.name} $depth={1} $selected={f.selected}>
                <Glyph name="angleRight" size={20} color="#555" />
                <TreeIcon><FlowGlyph /></TreeIcon>
                <TreeLabel $gap={10}>{f.name}</TreeLabel>
                <Ring $size={13} $w={1} />
              </TreeRow>
            ))}
            <TreeRow><Glyph name="angleRight" size={20} color="#555" /><TreeLabel $gap={11}>Subflows</TreeLabel></TreeRow>
            <TreeRow><Glyph name="angleRight" size={20} color="#555" /><TreeLabel $gap={11}>Global Configuration Nodes</TreeLabel></TreeRow>
          </ScrollBody>
          <ScrollTrack><Arrow dir="up" color="#a3a3a3" /><Arrow dir="down" color="#a3a3a3" /></ScrollTrack>
        </Scrollable>
        <Grip />
        <DetailHeader>
          <DetailIcon><FlowGlyph w={25} h={29} /></DetailIcon>
          Flow 3
          <DetailButton><Glyph name="search" size={15} /></DetailButton>
        </DetailHeader>
        <Details>
          <Scrollable $h={148} $bg="#fff">
            <ScrollBody>
              <PropertyRow>
                <PropertyName>Flow</PropertyName>
                <PropertyValue>"d220eff5.d400d"</PropertyValue>
              </PropertyRow>
            </ScrollBody>
            <ScrollTrack><Arrow dir="up" color="#a3a3a3" /><Arrow dir="down" color="#a3a3a3" /></ScrollTrack>
          </Scrollable>
        </Details>
        <Tips>
          <TipButtons>
            <BoxButton><Glyph name="refresh" size={18} /></BoxButton>
            <BoxButton><Glyph name="times" size={19} /></BoxButton>
          </TipButtons>
          <TipText>
            <TipLine><Key>ctrl</Key><Key>click</Key>in the workspace to</TipLine>
            <TipLine>open the quick-add dialog</TipLine>
          </TipText>
        </Tips>
        <SidebarFooter />
      </Sidebar>
    </Editor>

    <Taskbar>
      <Start>
        <svg width="24" height="24" viewBox="0 0 24 24"><path d="M0 3.400l10-1.400v9.500H0zM11 1.800L24 0v11.500H11zM0 12.500h10V22L0 20.600zM11 12.500h13V24l-13-1.800z" /></svg>
      </Start>
      <SearchField>
        <svg width="25" height="25" fill="none" stroke="#111" strokeWidth="1.700"><circle cx="16" cy="8.800" r="7.900" /><path d="M10.500 14.500L0.500 24.500" /></svg>
        <span>Type here to search</span>
      </SearchField>
      <TaskButton $w={72}><svg width="24" height="24"><circle cx="12" cy="12" r="10" fill="none" stroke="#000" strokeWidth="3" /></svg></TaskButton>
      <TaskButton $w={73}>
        <svg width="26" height="24" fill="none" stroke="#000" strokeWidth="1.500">
          <path d="M1 0v3.500h15V0M1 7h15v10H1zM1 24v-3.500h15V24M23 0v6M23 12v12" /><path d="M21.500 7h3v3h-3z" fill="#000" stroke="none" />
        </svg>
      </TaskButton>
      <TaskButton $w={80}><MailLogo /></TaskButton>
      <TaskButton $w={70}><EdgeLogo /></TaskButton>
      <TaskButton $w={79}><ChromeLogo /></TaskButton>
      <TaskButton $w={68} $running $focused>
        <svg width="48" height="42">
          <g transform="translate(9 4)"><ChromeLogo /></g>
          <g transform="translate(23 18)"><AvatarArt size={24} /></g>
        </svg>
      </TaskButton>
      <Stack />
      <TaskButton $w={61} $running><FolderLogo /></TaskButton>
      <Tray>
        <TrayItem $gap={19}><svg width="19" height="11" fill="none" stroke="#111" strokeWidth="1.600"><path d="M1 10l8.500-8.500L18 10" /></svg></TrayItem>
        <TrayItem $gap={14}>
          <svg width="18" height="24" fill="none" stroke="#111" strokeWidth="1.400">
            <path d="M2 6.500h9v11H2zM11 11l5-3.500v9.500l-5-3.500M2.500 3q5.500-4 11 0M2.500 21.500q5.500 4 11 0" />
          </svg>
        </TrayItem>
        <TrayItem $gap={12}>
          <svg width="25" height="22">
            <path d="M5 16a4.500 4.500 0 0 1 0-9 7.500 7.500 0 0 1 13-2.500A5 5 0 0 1 20 16z" fill="#8c8c8c" stroke="#333" strokeWidth="1.200" />
            <path d="M5 16l9-8 6 8z" fill="#d0d0d0" />
            <circle cx="18" cy="15" r="6.500" fill="#e0222e" /><path d="M15.500 12.500l5 5M20.500 12.500l-5 5" stroke="#fff" strokeWidth="1.600" />
          </svg>
        </TrayItem>
        <TrayItem $gap={16}>
          <svg width="23" height="13"><rect x="0.750" y="0.750" width="20" height="11.500" fill="none" stroke="#000" strokeWidth="1.500" /><path d="M2.500 2.500h16.500v8H2.500zM21 4h2v5h-2z" /></svg>
        </TrayItem>
        <TrayItem $gap={14}>
          <svg width="19" height="19" fill="none" stroke="#111" strokeWidth="1.300">
            <path d="M1 18A17 17 0 0 1 18 1M5.500 18A12.500 12.500 0 0 1 18 5.500M10 18a8 8 0 0 1 8-8" /><path d="M13.500 18a4.500 4.500 0 0 1 4.500-4.500" /><circle cx="17" cy="17" r="1.800" fill="#111" stroke="none" />
          </svg>
        </TrayItem>
        <TrayItem $gap={15}>
          <svg width="24" height="20" fill="none" stroke="#111" strokeWidth="1.300">
            <path d="M1 7h3.500L10 2v16l-5.500-5H1zM13 7q2 3 0 6M16 4.500q4 5.500 0 11M19 2q6 8 0 16" />
          </svg>
        </TrayItem>
        <Clock><span>5:01 PM</span><span>04-Jun-21</span></Clock>
        <TrayItem $gap={29}>
          <svg width="25" height="24" fill="none" stroke="#111" strokeWidth="1.500"><path d="M1 1h23v17.500h-7.500L12.500 23l-4-4.500H1z" /></svg>
        </TrayItem>
        <ShowDesktop />
      </Tray>
    </Taskbar>
  </Screen>
);

export default App;
